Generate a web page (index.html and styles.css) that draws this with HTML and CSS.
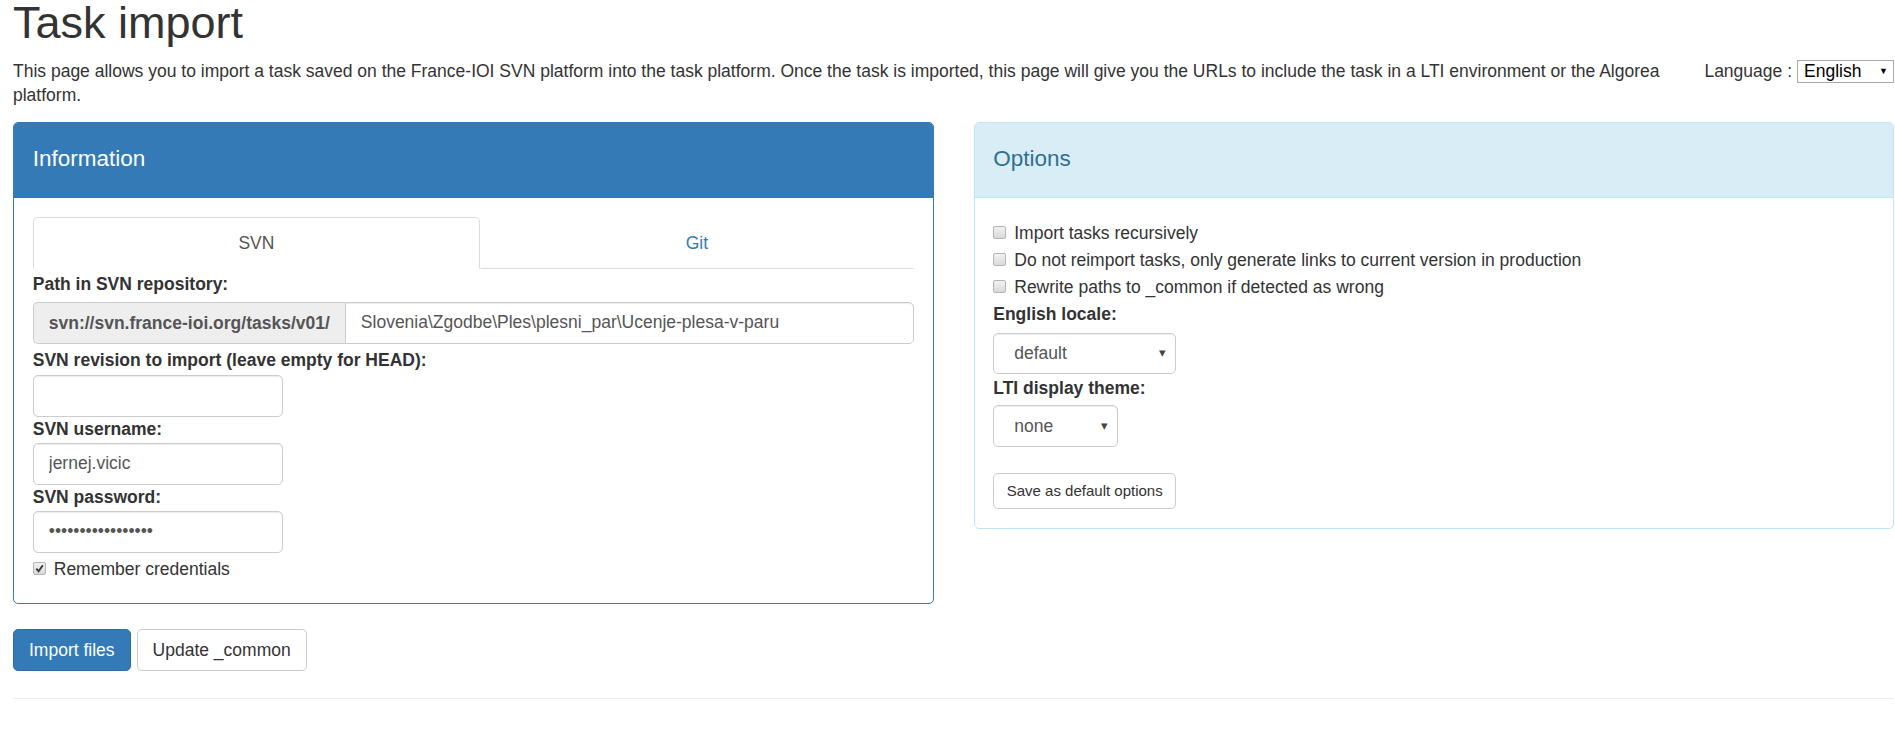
FILE: index.html
```html
<!DOCTYPE html>
<html lang="en">
<head>
<meta charset="utf-8">
<title>Task import</title>
<link rel="stylesheet" href="styles.css">
</head>
<body>
<div class="page">
  <h1 class="title">Task import</h1>
  <div class="intro">
    <p class="intro-text">This page allows you to import a task saved on the France-IOI SVN platform into the task platform. Once the task is imported, this page will give you the URLs to include the task in a LTI environment or the Algorea platform.</p>
    <div class="lang">
      <span class="lang-label">Language :</span>
      <div class="lang-select"><span>English</span><span class="lang-arrow">&#9660;</span></div>
    </div>
  </div>

  <div class="columns">
    <div class="panel panel-primary">
      <div class="panel-heading">Information</div>
      <div class="panel-body">
        <div class="tabs">
          <div class="tab active">SVN</div>
          <div class="tab">Git</div>
        </div>
        <div class="field-label first">Path in SVN repository:</div>
        <div class="input-group">
          <span class="addon">svn://svn.france-ioi.org/tasks/v01/</span>
          <input class="control grow" type="text" value="Slovenia\Zgodbe\Ples\plesni_par\Ucenje-plesa-v-paru">
        </div>
        <div class="field-label rev">SVN revision to import (leave empty for HEAD):</div>
        <input class="control small" type="text" value="">
        <div class="field-label">SVN username:</div>
        <input class="control small" type="text" value="jernej.vicic">
        <div class="field-label">SVN password:</div>
        <input class="control small" type="password" value="xxxxxxxxxxxxxxxxx">
        <div class="check-line last">
          <span class="cb checked"><svg width="9" height="9" viewBox="0 0 9 9"><path d="M1.3 4.6 L3.6 7.3 L7.8 1.2" fill="none" stroke="#333" stroke-width="1.8"/></svg></span>
          <span>Remember credentials</span>
        </div>
      </div>
    </div>

    <div class="panel panel-info">
      <div class="panel-heading">Options</div>
      <div class="panel-body options-body">
        <div class="check-line"><span class="cb"></span><span>Import tasks recursively</span></div>
        <div class="check-line"><span class="cb"></span><span>Do not reimport tasks, only generate links to current version in production</span></div>
        <div class="check-line"><span class="cb"></span><span>Rewrite paths to _common if detected as wrong</span></div>
        <div class="field-label opt">English locale:</div>
        <div class="select select-locale"><span>default</span><span class="sel-arrow">&#9662;</span></div>
        <div class="field-label opt second">LTI display theme:</div>
        <div class="select select-theme"><span>none</span><span class="sel-arrow">&#9662;</span></div>
        <div class="save-row"><button class="btn btn-sm" type="button">Save as default options</button></div>
      </div>
    </div>
  </div>

  <div class="actions">
    <button class="btn btn-primary" type="button">Import files</button>
    <button class="btn btn-default" type="button">Update _common</button>
  </div>
  <div class="rule"></div>
</div>
</body>
</html>
```
FILE: styles.css
```css
* { box-sizing: border-box; }
html, body { margin: 0; padding: 0; background: #fff; }
body {
  font-family: "Liberation Sans", Arial, Helvetica, sans-serif;
  font-size: 17.5px;
  line-height: 24px;
  color: #333;
}
.page { padding: 0 1px 0 13px; }

.title {
  margin: -2px 0 0;
  font-size: 45px;
  line-height: 49.5px;
  font-weight: 500;
  color: #333;
}

.intro { display: flex; align-items: flex-start; margin-top: 11.5px; }
.intro-text { flex: 1; margin: 0; }
.lang { display: flex; align-items: center; gap: 5px; margin-left: 13px; height: 24px; }
.lang-select {
  width: 97px; height: 23px;
  border: 1px solid #a9a9a9;
  display: flex; align-items: center; justify-content: space-between;
  padding: 0 5px 0 6px;
  color: #000;
}
.lang-arrow { font-size: 9px; line-height: 9px; }

.columns {
  display: grid;
  grid-template-columns: 1fr 1fr;
  gap: 40px;
  margin-top: 15px;
  align-items: start;
}

.panel { border: 1px solid #337ab7; border-radius: 5px; background: #fff; }
.panel-heading {
  height: 75px;
  padding: 24px 18.75px 0;
  font-size: 22.5px;
  line-height: 24px;
  background: #337ab7;
  color: #fff;
  border-bottom: 1px solid #337ab7;
  border-radius: 4px 4px 0 0;
}
.panel-info { border-color: #bce8f1; }
.panel-info .panel-heading { background: #d9edf7; color: #31708f; border-bottom-color: #bce8f1; }
.panel-body { padding: 18.75px; }

.tabs { display: flex; }
.tab {
  flex: 1 1 auto;
  text-align: center;
  padding: 13px 18px;
  border: 1px solid transparent;
  border-bottom-color: #ddd;
  color: #337ab7;
}
.tab.active {
  color: #555;
  border-color: #ddd;
  border-bottom-color: transparent;
  border-radius: 5px 5px 0 0;
}

.field-label { font-weight: bold; line-height: 22px; margin: 1px 0 3px; }
.field-label.first { margin: 4px 0 7px; }
.field-label.rev { margin: 0 0 4px; }

.input-group {
  display: flex;
  height: 42px;
  margin-bottom: 5px;
}
.addon {
  display: flex; align-items: center;
  padding: 0 15px;
  background: #eee;
  border: 1px solid #ccc;
  border-right: 0;
  border-radius: 5px 0 0 5px;
  color: #555;
  font-weight: bold;
  white-space: nowrap;
}
.control {
  display: block;
  height: 42px;
  padding: 0 15px;
  border: 1px solid #ccc;
  border-radius: 5px;
  font: inherit;
  color: #555;
  background: #fff;
  box-shadow: inset 0 1px 1px rgba(0,0,0,.075);
  outline: none;
}
.control.grow { flex: 1; border-radius: 0 5px 5px 0; }
.control.small { width: 250px; }

.check-line { display: flex; align-items: center; gap: 8px; margin: 3px 0; line-height: 24px; }
.check-line.last { margin: 4px 0 3px; }
.cb {
  width: 13px; height: 13px;
  border: 1px solid #b5b5b5;
  border-radius: 2px;
  background: linear-gradient(#f2f2f2, #d9d9d9);
  display: flex; align-items: center; justify-content: center;
  flex: none;
}

.options-body .check-line:first-child { margin-top: 4px; }
.field-label.opt { margin: 4px 0 8px; }
.field-label.opt.second { margin: 3px 0 6px; }
.select {
  display: flex; align-items: center; justify-content: space-between;
  height: 41px;
  padding: 0 9px 0 20px;
  border: 1px solid #ccc;
  border-radius: 5px;
  color: #555;
  box-shadow: inset 0 1px 1px rgba(0,0,0,.075);
}
.select-locale { width: 183px; }
.select-theme { width: 125px; height: 42px; }
.sel-arrow { font-size: 13px; color: #444; }
.save-row { margin-top: 26px; }

.btn {
  font: inherit;
  height: 42px;
  padding: 0 15px;
  border: 1px solid #ccc;
  border-radius: 5px;
  background: #fff;
  color: #333;
  cursor: pointer;
}
.btn-primary { background: #337ab7; border-color: #2e6da4; color: #fff; }
.btn-sm { font-size: 15px; height: 36px; padding: 0 12.5px; }

.actions { display: flex; gap: 6px; margin-top: 25px; }
.rule { border-top: 1px solid #eee; margin-top: 27px; }
```
